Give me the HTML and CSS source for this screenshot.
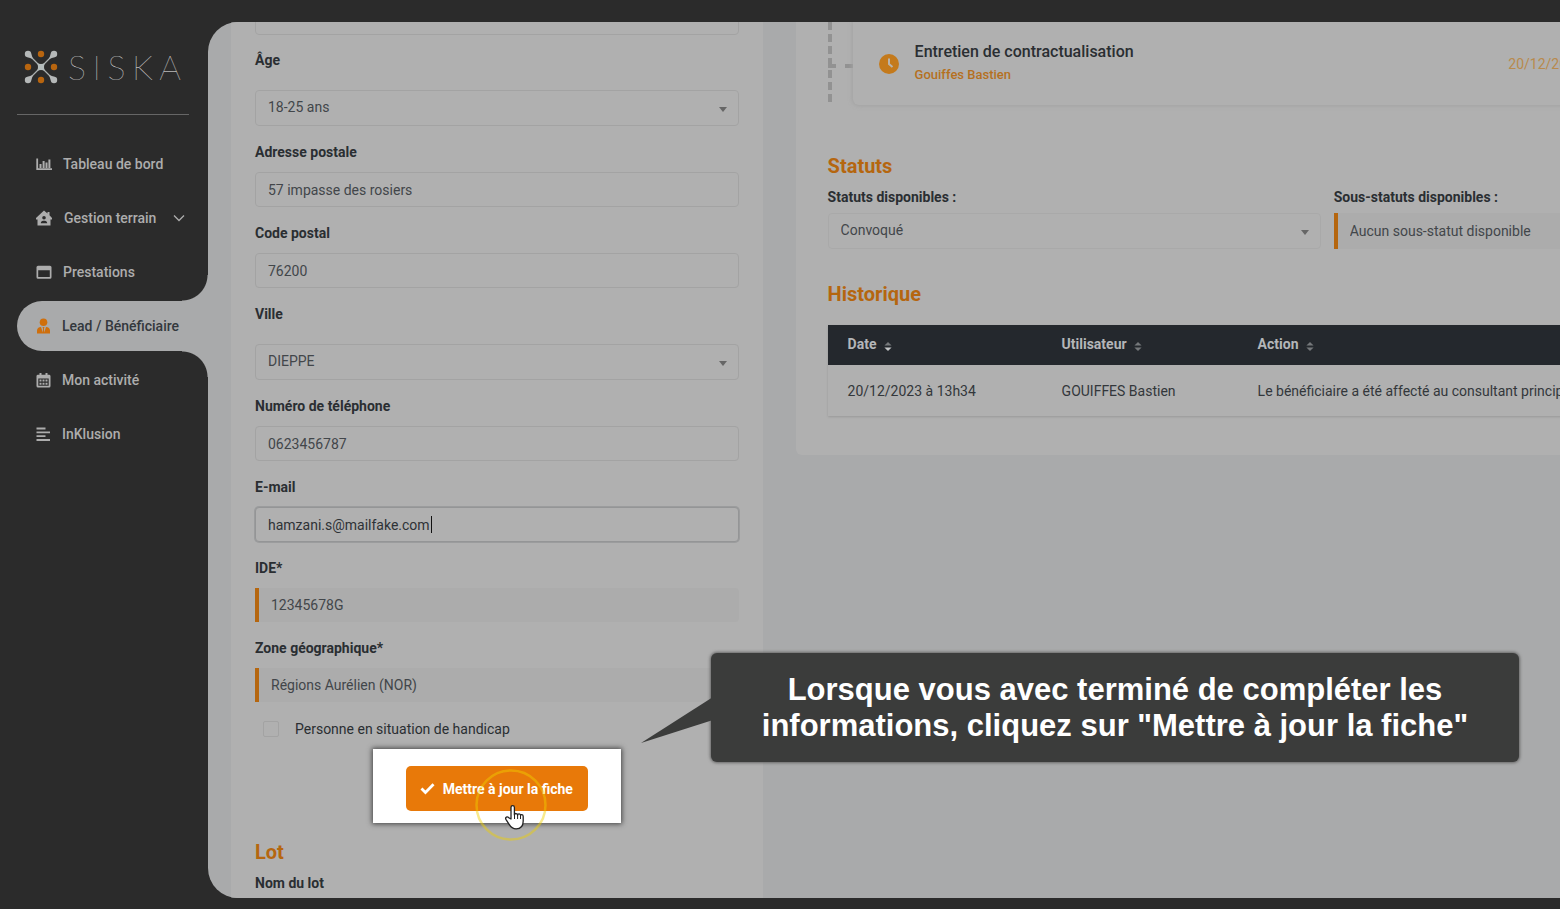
FILE: index.html
```html
<!DOCTYPE html>
<html lang="fr">
<head>
<meta charset="utf-8">
<title>Siska – Lead / Bénéficiaire</title>
<link rel="stylesheet" href="styles.css">
</head>
<body>
<div class="app">
  <aside class="sidebar">
    <div class="logo">
      <svg class="logo-mark" viewBox="0 0 34 34" aria-hidden="true">
        <g stroke="#a9aeae" stroke-width="1.2"><path d="M4 4l26 26M30 4L4 30"/></g>
        <path fill="#b4bcbc" d="M13 13q4 2 8 0q-2 4 0 8q-4-2-8 0q2-4 0-8z"/>
        <g fill="#b5b8b8"><circle cx="4" cy="4" r="3.2"/><circle cx="30" cy="4" r="3.2"/><circle cx="4" cy="30" r="3.2"/><circle cx="30" cy="30" r="3.2"/><path d="M3 7l4-4 2 6zM31 7l-4-4-2 6zM3 27l4 4 2-6zM31 27l-4 4-2-6z"/></g>
        <g fill="#b8650f"><circle cx="17" cy="4" r="3.2"/><circle cx="4" cy="17" r="3.2"/><circle cx="30" cy="17" r="3.2"/><circle cx="17" cy="30" r="3.2"/></g>
      </svg>
      <div class="logo-name"><span>S</span><span>I</span><span>S</span><span>K</span><span>A</span></div>
    </div>
    <nav class="nav">
      <a class="nav-item" href="#"><svg viewBox="0 0 16 16"><path fill="none" stroke="currentColor" stroke-width="1.8" d="M1.2 2.5v10.7H16"/><path fill="currentColor" d="M3.5 8h2v4h-2zM6.600 5h2v7h-2zM9.500 6.500h2v5.500h-2zM12.400 3.500h2v8.500h-2z"/></svg><span>Tableau de bord</span></a>
      <a class="nav-item home" href="#"><svg viewBox="0 0 16 16"><path fill="currentColor" fill-rule="evenodd" d="M8 .5l3.500 3V2h2v3.200L16 8v1.500h-1.500V15.500H1.500V9.500H0V8zM8 6a1.800 1.800 0 100 3.600A1.800 1.800 0 008 6zM4.800 13.300h6.400c0-1.800-1-2.600-2.400-2.600H7.200c-1.400 0-2.400.8-2.400 2.600z"/></svg><span>Gestion terrain</span><svg class="chevron" viewBox="0 0 12 12"><path fill="none" stroke="currentColor" stroke-width="1.300" d="M1 3.500l5 5 5-5"/></svg></a>
      <a class="nav-item" href="#"><svg viewBox="0 0 16 16"><path fill="currentColor" fill-rule="evenodd" d="M2 1.800h12A1.500 1.500 0 0115.500 3.300v9.900a1.500 1.500 0 01-1.500 1.500H2A1.500 1.500 0 01.5 13.200V3.300A1.500 1.500 0 012 1.800zM2.200 6.200v6.800h11.600V6.200z"/></svg><span>Prestations</span></a>
      <a class="nav-item active" href="#"><svg viewBox="0 0 16 16"><circle cx="7.500" cy="4.300" r="3.800" fill="#cf6f0c"/><path fill="#cf6f0c" d="M1 15.500v-2.800C1 10.500 2.500 9.200 5 9l1.800 5.500L7 10.500 6.500 9h2L8 10.500l.2 4L10 9c2.500.2 4 1.500 4 3.700v2.800z"/></svg><span>Lead / Bénéficiaire</span></a>
      <a class="nav-item narrow" href="#"><svg viewBox="0 0 16 16"><path fill="currentColor" fill-rule="evenodd" d="M3.500 1h2v1.700h4V1h2v1.700H13A1.500 1.500 0 0114.500 4v10a1.500 1.500 0 01-1.500 1.500H2A1.500 1.500 0 01.5 14V4A1.500 1.500 0 012 2.700h1.500zM2.300 6.500v7.200h10.400V6.500z"/><path fill="currentColor" d="M3.500 7.500h2v2h-2zM6.500 7.500h2v2h-2zM9.500 7.500h2v2h-2zM3.500 10.700h2v2h-2zM6.500 10.700h2v2h-2zM9.500 10.700h2v2h-2z"/></svg><span>Mon activité</span></a>
      <a class="nav-item narrow" href="#"><svg viewBox="0 0 16 16"><path stroke="currentColor" stroke-width="1.800" d="M.5 2.500h9M.5 6.300h13.500M.5 10.200h9M.5 14h13.500"/></svg><span>InKlusion</span></a>
    </nav>
  </aside>

  <main class="main">
    <section class="panel form-panel">
      <form class="form">
        <input class="control" type="text" aria-label="Nom">
        <div class="field wide"><label for="age">Âge</label><div class="select"><select id="age" class="control"><option>18-25 ans</option></select></div></div>
        <div class="field"><label for="adresse">Adresse postale</label><input id="adresse" class="control" type="text" value="57 impasse des rosiers"></div>
        <div class="field"><label for="cp">Code postal</label><input id="cp" class="control" type="text" value="76200"></div>
        <div class="field wide"><label for="ville">Ville</label><div class="select"><select id="ville" class="control"><option>DIEPPE</option></select></div></div>
        <div class="field"><label for="tel">Numéro de téléphone</label><input id="tel" class="control" type="tel" value="0623456787"></div>
        <div class="field"><label for="mail">E-mail</label><div class="caret-box"><input id="mail" class="control focused" type="text" value="hamzani.s@mailfake.com"><i class="caret"></i></div></div>
        <div class="field"><label for="ide">IDE*</label><input id="ide" class="control locked" type="text" value="12345678G" readonly></div>
        <div class="field"><label for="zone">Zone géographique*</label><input id="zone" class="control locked" type="text" value="Régions Aurélien (NOR)" readonly></div>
        <label class="check"><input type="checkbox"><span>Personne en situation de handicap</span></label>
        <div class="spotlight">
          <button class="submit" type="button"><svg viewBox="0 0 16 14" aria-hidden="true"><path fill="none" stroke="#fff" stroke-width="3" d="M1.500 7l4.300 4.300L14.500 2.500"/></svg>Mettre à jour la fiche</button>
          <svg class="pointer" viewBox="0 0 72 72" aria-hidden="true">
            <circle cx="36" cy="36" r="34.500" fill="none" stroke="#f0d000" stroke-opacity=".45" stroke-width="2.500"/>
            <path fill="#fff" stroke="#222" stroke-width="1.300" stroke-linejoin="round" d="M36 50V38.500c0-2.400 3.400-2.400 3.400 0V46c0-2 3.200-2 3.200.2 0-1.800 3-1.700 3 .4 0-1.500 2.600-1.400 2.600.8V52c0 5-2.700 7.800-7 7.800-4 0-5.600-2-7.400-5l-2.900-4.500c-1-2 1.300-3.200 2.900-1.600z"/>
            <path stroke="#222" stroke-width="1" d="M39.500 45v5M42.600 46v4M45.500 47v3"/>
          </svg>
        </div>
        <h2 class="title lot">Lot</h2>
        <p class="label">Nom du lot</p>
      </form>
    </section>

    <section class="panel status-panel">
      <div class="timeline">
        <article class="event">
          <svg class="clock" viewBox="0 0 20 20" aria-hidden="true"><circle cx="10" cy="10" r="10" fill="#c47a1c"/><path fill="none" stroke="#b9b4ac" stroke-width="2" d="M10 4.500V10l3.500 3"/></svg>
          <div class="event-text"><h3>Entretien de contractualisation</h3><p>Gouiffes Bastien</p></div>
          <time>20/12/2023</time>
        </article>
      </div>
      <h2 class="title">Statuts</h2>
      <div class="status-grid">
        <div class="status-field"><label for="statut">Statuts disponibles :</label><div class="select"><select id="statut" class="control pale"><option>Convoqué</option></select></div></div>
        <div class="status-field"><label for="sous">Sous-statuts disponibles :</label><input id="sous" class="control locked" type="text" value="Aucun sous-statut disponible" readonly></div>
      </div>
      <h2 class="title history">Historique</h2>
      <table class="table">
        <thead><tr><th class="c-date">Date <svg class="sort on" viewBox="0 0 8 10"><path class="up" d="M0 4l4-4 4 4z"/><path class="down" d="M0 6l4 4 4-4z"/></svg></th><th class="c-user">Utilisateur <svg class="sort" viewBox="0 0 8 10"><path class="up" d="M0 4l4-4 4 4z"/><path class="down" d="M0 6l4 4 4-4z"/></svg></th><th>Action <svg class="sort" viewBox="0 0 8 10"><path class="up" d="M0 4l4-4 4 4z"/><path class="down" d="M0 6l4 4 4-4z"/></svg></th></tr></thead>
        <tbody><tr><td>20/12/2023 à 13h34</td><td>GOUIFFES Bastien</td><td>Le bénéficiaire a été affecté au consultant principal</td></tr></tbody>
      </table>
    </section>
  </main>
</div>

<div class="callout" role="tooltip">
  <svg class="tail" viewBox="0 0 72 46" aria-hidden="true"><path fill="#3b3c3b" d="M72 0L0 46l72-23z"/></svg>
  <p>Lorsque vous avec terminé de compléter les<br>informations, cliquez sur "Mettre à jour la fiche"</p>
</div>
</body>
</html>
```
FILE: styles.css
```css
* { box-sizing: border-box; }
html, body { height: 100%; }
body {
  margin: 0;
  overflow: hidden;
  background: #2b2b2b;
  color: #2a2e32;
  font-family: Roboto, "Liberation Sans", sans-serif;
  font-size: 14px;
  line-height: 20px;
}
h2, h3, p { margin: 0; }
input, select, button { font: inherit; color: inherit; margin: 0; }

.app {
  display: flex;
  height: 100vh;
  padding: 22px 0 11px;
}

/* Sidebar */
.sidebar {
  flex: 0 0 208px;
  padding-left: 17px;
}
.logo {
  display: flex;
  align-items: center;
  gap: 10px;
  height: 93px;
  margin-right: 19px;
  padding: 0 8px 2px 7px;
  border-bottom: 1px solid #666;
}
.logo-mark { flex: none; width: 34px; height: 34px; }
.logo-name {
  flex: 1;
  display: flex;
  justify-content: space-between;
  font: 100 34px/40px Lato, sans-serif;
  color: #f4f4f4;
}
.nav {
  display: flex;
  flex-direction: column;
  gap: 4px;
  padding-top: 24px;
}
.nav-item {
  display: flex;
  align-items: center;
  gap: 11px;
  height: 50px;
  padding-left: 19px;
  color: #adadad;
  text-decoration: none;
  font-weight: 500;
}
.nav-item svg { flex: none; width: 16px; height: 16px; }
.nav-item.home { gap: 12px; }
.nav-item.narrow { gap: 10px; }
.nav-item .chevron { width: 12px; height: 12px; margin-left: 5px; }
.nav-item.active {
  position: relative;
  gap: 10px;
  background: #a9aaab;
  color: #33383d;
  border-radius: 25px 0 0 25px;
}
.nav-item.active::before,
.nav-item.active::after {
  content: "";
  position: absolute;
  right: 0;
  width: 26px;
  height: 26px;
}
.nav-item.active::before {
  bottom: 100%;
  background: radial-gradient(circle at 0 0, transparent 25px, #a9aaab 26px);
}
.nav-item.active::after {
  top: 100%;
  background: radial-gradient(circle at 0 100%, transparent 25px, #a9aaab 26px);
}

/* Page area */
.main {
  flex: 1;
  min-width: 0;
  display: flex;
  align-items: flex-start;
  gap: 33px;
  padding-left: 23px;
  overflow: hidden;
  background: #a9aaab;
  border-radius: 30px 0 0 30px;
}
.panel { flex: none; background: #b0b0b0; }
.form-panel { width: 40%; padding: 0 24px 40px; }
.status-panel {
  width: 80%;
  height: 433px;
  padding: 0 32px;
  border-radius: 0 0 6px 6px;
}

/* Form */
.form {
  display: flex;
  flex-direction: column;
  margin-top: -22px;
}
.field {
  display: flex;
  flex-direction: column;
  gap: 10px;
  margin-bottom: 16px;
}
.field.wide { gap: 20px; }
.field label, .label, .status-field label { font-weight: 700; }
.form > .control { margin-bottom: 15px; }
.control {
  display: block;
  width: 100%;
  height: 35px;
  padding: 0 12px;
  border: 1px solid #a3a3a3;
  border-radius: 4px;
  outline: none;
  background: #b0b0b0;
  color: #42464a;
  appearance: none;
}
.select { position: relative; }
.select .control { height: 36px; padding-bottom: 2px; }
.select::after {
  content: "";
  position: absolute;
  right: 12px;
  top: 17px;
  border: 4px solid transparent;
  border-top: 5px solid #666;
  border-bottom: 0;
}
.control.pale { border-color: #a9a9a9; }
.control.focused {
  border-color: #949596;
  box-shadow: 0 0 0 1px #9b9c9d;
  color: #2e3236;
}
.caret-box { position: relative; }
.caret {
  position: absolute;
  left: 176px;
  top: 9px;
  width: 1px;
  height: 17px;
  background: #111;
}
.control.locked {
  height: 34px;
  border: 0;
  border-left: 4px solid #b5660f;
  border-radius: 0 4px 4px 0;
  background: #acacac;
}
.check {
  display: flex;
  align-items: center;
  gap: 16px;
  margin: 1px 0 10px;
  padding-left: 8px;
}
.check input {
  width: 16px;
  height: 16px;
  border: 1px solid #a3a3a3;
  border-radius: 2px;
  appearance: none;
}
.spotlight {
  position: relative;
  align-self: center;
  padding: 17px 33px 12px;
  background: #fff;
  box-shadow: 0 0 5px 1px #444;
}
.submit {
  display: flex;
  align-items: center;
  gap: 8px;
  height: 45px;
  padding: 0 15px 0 14px;
  border: 0;
  border-radius: 5px;
  background: #e87909;
  color: #fff;
  font-weight: 700;
}
.submit svg { width: 15px; height: 13px; }
.pointer {
  position: absolute;
  left: 102px;
  top: 20px;
  width: 72px;
  height: 72px;
}
.title {
  color: #b5660f;
  font-size: 20px;
  line-height: 28px;
  font-weight: 700;
}
.title.lot { margin: 15px 0 7px; }

/* Status column */
.timeline {
  height: 84px;
  margin-bottom: 46px;
  padding-left: 25px;
  background:
    repeating-linear-gradient(to bottom, #929292 0 8px, transparent 8px 12px) 0 0 / 4px 100% no-repeat,
    repeating-linear-gradient(to right, #929292 0 8px, transparent 8px 17px) 0 42px / 25px 4px no-repeat;
}
.event {
  display: flex;
  align-items: center;
  gap: 16px;
  height: 83px;
  padding: 0 244px 0 26px;
  border-radius: 0 0 6px 6px;
  box-shadow: 0 0 4px 1px #a3a3a3;
  background: #b0b0b0;
}
.clock { flex: none; width: 20px; height: 20px; }
.event-text { flex: 1; }
.event h3 { font-size: 16px; line-height: 22px; font-weight: 500; }
.event p { line-height: 24px; font-size: 13px; font-weight: 500; color: #b5701f; }
.event time { color: #b88a4c; }
.status-grid {
  display: grid;
  grid-template-columns: 1fr 1fr;
  gap: 13px;
  margin-top: 7px;
}
.status-field { display: flex; flex-direction: column; gap: 6px; }
.status-field .control { height: 36px; }
.title.history { margin: 31px 0 17px; }
.table {
  width: 100%;
  table-layout: fixed;
  border-collapse: collapse;
  text-align: left;
  box-shadow: 0 1px 2px #999;
}
.table th {
  height: 40px;
  padding: 0 20px 2px;
  background: #24282d;
  color: #b4b6b8;
  font-weight: 700;
}
.table td {
  height: 51px;
  padding: 0 20px;
  white-space: nowrap;
  color: #33373b;
}
.c-date { width: 214px; }
.c-user { width: 196px; }
.sort { width: 8px; height: 9px; margin-left: 4px; vertical-align: -2px; fill: #75787b; }
.sort.on .down { fill: #c4c6c8; }

/* Guidance bubble */
.callout {
  position: absolute;
  left: 711px;
  right: 41px;
  top: 653px;
  padding: 19px 0 18px;
  border-radius: 6px;
  background: #3b3c3b;
  box-shadow: 0 0 3px 1px #666;
  color: #fff;
  text-align: center;
  font: 700 31px/36px "Arial Rounded MT Bold", "Liberation Sans", sans-serif;
}
.tail {
  position: absolute;
  left: -70px;
  top: 44px;
  width: 72px;
  height: 46px;
}
```
